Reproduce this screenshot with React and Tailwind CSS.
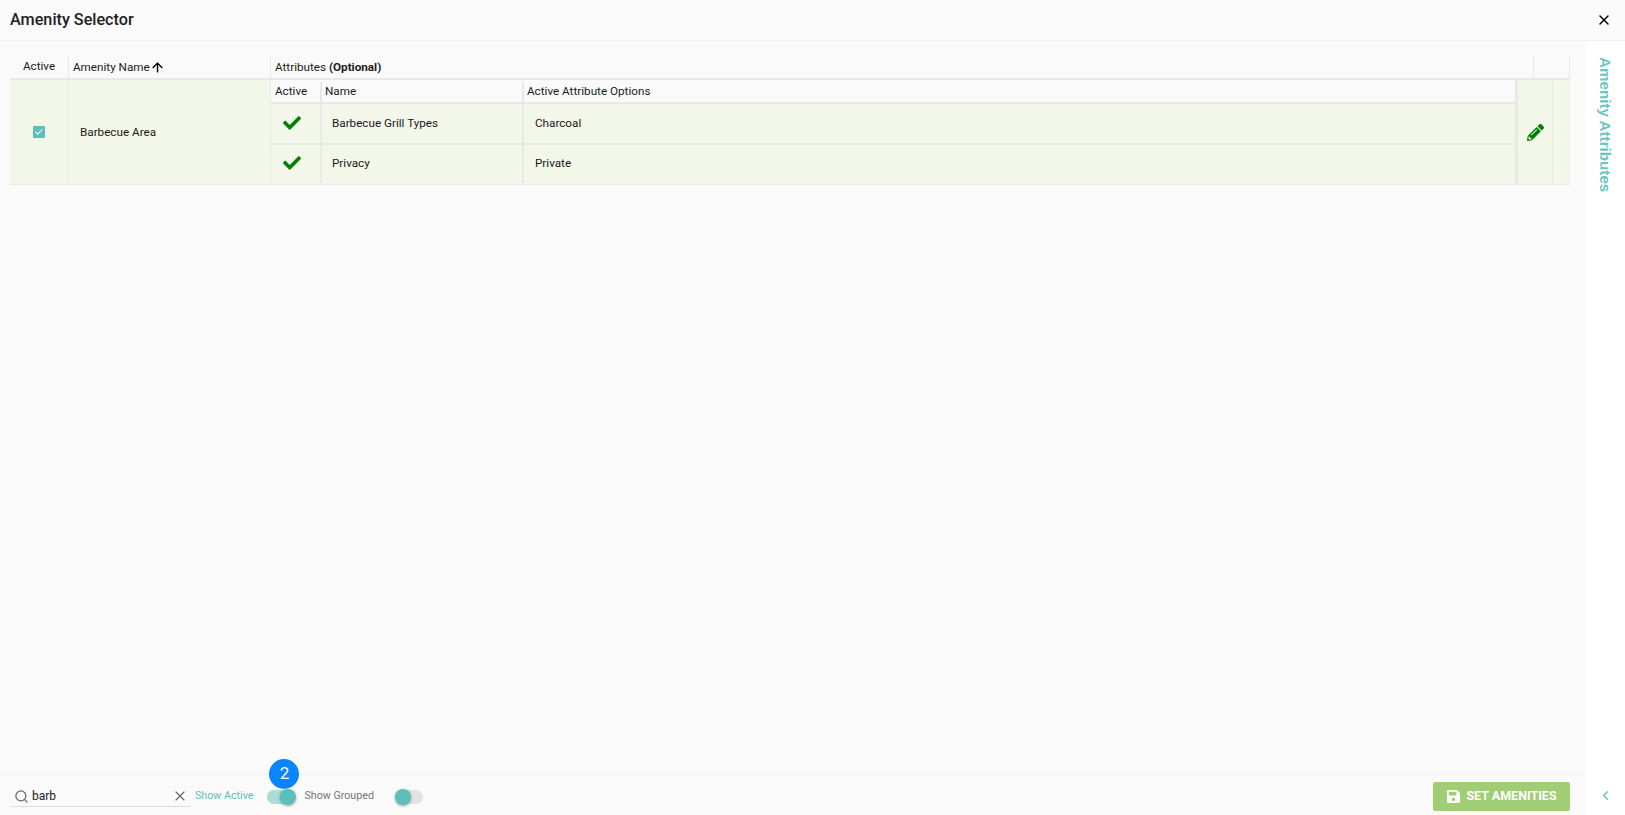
import React from 'react';
import { FaCheck, FaPencilAlt, FaSave } from 'react-icons/fa';
import { X, ArrowUp, ChevronLeft, Check, Search } from 'lucide-react';

const AttributeRow = ({ name, option, last }) => (
  <div className={`flex items-stretch ${last ? 'h-[39px] pb-[1px]' : 'h-[41px] border-b-2 border-[#e8eae4]'}`}>
    <div className="w-[49px] shrink-0 flex items-center justify-center pb-[2px] pr-[8px]">
      <FaCheck className="text-[#008000] text-[18px]" />
    </div>
    <div className="w-[202px] shrink-0 flex items-center pl-[10px] border-l-2 border-[#e8eae4]">{name}</div>
    <div className="flex-1 flex items-center pl-[11px] border-l-2 border-[#e8eae4]">{option}</div>
  </div>
);

const Toggle = ({ on }) => (
  <div className="relative w-[28px] h-[14px] rounded-full bg-[#e3e3e3]">
    {on && <div className="absolute inset-0 rounded-full bg-[#aadcd8]" />}
    <div className={`absolute top-[-1px] w-[16px] h-[16px] rounded-full bg-[#5cbfb9] shadow-[0_1px_3px_rgba(0,0,0,0.35)] ${on ? 'right-[-1px]' : 'left-0'}`} />
  </div>
);

export default function App() {
  return (
    <div className="h-[815px] w-[1625px] overflow-hidden flex flex-col bg-[#fafafa] font-['Roboto',sans-serif] text-[11.7px] text-[#1a1a1a]">
      <header className="h-[41px] shrink-0 flex items-center justify-between pl-[10px] pr-[13px] border-b border-[#f0f0f0]">
        <h1 className="text-[16.2px] font-medium text-[#212121]">Amenity Selector</h1>
        <X size={16} strokeWidth={2} className="text-black" />
      </header>

      <div className="flex-1 flex min-h-0">
        <div className="flex-1 flex flex-col min-w-0">
          <main className="flex-1 pl-[10px] pr-[15px] pt-[15px]">
            <div className="flex h-[24px] items-stretch border-b-2 border-[#e8e8e8]">
              <div className="w-[58px] shrink-0 flex items-center justify-center">Active</div>
              <div className="w-[202px] shrink-0 flex items-center pl-[4px] pt-[1px] border-l border-[#e8e8e8]">
                Amenity Name
                <ArrowUp size={15} strokeWidth={2.25} className="text-black" />
              </div>
              <div className="flex-1 flex items-center pl-[4px] pt-[1px] border-l border-[#e8e8e8]">
                <span>Attributes <b className="font-bold">(Optional)</b></span>
              </div>
              <div className="w-[37px] shrink-0 border-x border-[#e8e8e8]" />
            </div>

            <div className="flex h-[105px] items-stretch bg-[#f2f7ea] border-b border-[#e8eae4]">
              <div className="w-[58px] shrink-0 flex items-center justify-center">
                <div className="w-[12px] h-[12px] rounded-[1px] bg-[#5cbfb9] flex items-center justify-center">
                  <Check size={10} strokeWidth={2.5} className="text-white" />
                </div>
              </div>
              <div className="w-[202px] shrink-0 flex items-center pl-[11px] pt-[1px] border-l border-[#e8eae4]">Barbecue Area</div>
              <div className="flex-1 flex flex-col border-l border-[#e8eae4]">
                <div className="h-[24px] flex items-stretch bg-[#fafafa] border-b-2 border-[#e8e8e8] pt-[2px]">
                  <div className="w-[49px] shrink-0 flex items-center pl-[4px]">Active</div>
                  <div className="w-[202px] shrink-0 flex items-center pl-[3px] border-l-2 border-[#e8e8e8]">Name</div>
                  <div className="flex-1 flex items-center pl-[3px] border-l-2 border-[#e8e8e8]">Active Attribute Options</div>
                </div>
                <AttributeRow name="Barbecue Grill Types" option="Charcoal" />
                <AttributeRow name="Privacy" option="Private" last />
              </div>
              <div className="w-[37px] shrink-0 flex items-center justify-center pl-[1px] border-l-[3px] border-[#e8eae4]">
                <FaPencilAlt className="text-[#008000] text-[17px]" />
              </div>
              <div className="w-[18px] shrink-0 border-l border-[#e8eae4]" />
            </div>
          </main>

          <footer className="h-[41px] shrink-0 flex items-center justify-between pl-[10px] pr-[15px] border-t border-[#eef3f1]">
            <div className="flex items-center mt-[4px] text-[10.7px]">
              <div className="w-[180px] h-[24px] mb-[4px] pt-[3px] flex items-center border-b border-[#dcdcdc] pl-[4px] pr-[2px]">
                <Search size={15} strokeWidth={2} className="text-[#666666]" />
                <span className="ml-[3px] flex-1 text-[12px] text-[#222222]">barb</span>
                <X size={16} strokeWidth={1.75} className="text-[#666666]" />
              </div>
              <span className="ml-[5px] mb-[2px] text-[#5cbfb9]">Show Active</span>
              <div className="relative ml-[14px]">
                <Toggle on />
                <div className="absolute left-[2px] top-[-31px] w-[30px] h-[30px] rounded-full bg-[#0a84ff] flex items-center justify-center text-white text-[17px]">2</div>
              </div>
              <span className="ml-[9px] mb-[2px] text-[#777777]">Show Grouped</span>
              <div className="ml-[21px]">
                <Toggle />
              </div>
            </div>
            <button className="w-[137px] h-[29px] mt-[2px] rounded-[2px] bg-[#a1cd74] flex items-center justify-center gap-[5px] text-white text-[12.5px] font-bold">
              <FaSave className="text-[15px]" />
              SET AMENITIES
            </button>
          </footer>
        </div>

        <aside className="w-[40px] shrink-0 bg-white flex flex-col items-center justify-between pt-[16px] pb-[12px]">
          <span className="[writing-mode:vertical-rl] font-['Liberation_Sans',sans-serif] text-[15.2px] font-bold text-[#6cc5bf]">Amenity Attributes</span>
          <ChevronLeft size={15} strokeWidth={2} className="text-[#5cbfb9]" />
        </aside>
      </div>
    </div>
  );
}
